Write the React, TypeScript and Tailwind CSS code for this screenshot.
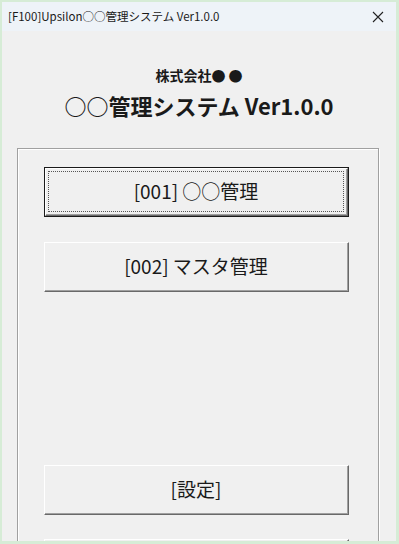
const jp = "font-['Noto_Sans_CJK_JP','Noto_Sans',sans-serif]";

function CloseIcon() {
  return (
    <svg width="12" height="12" viewBox="0 0 12 12" className="text-[#222]">
      <path d="M1 1 L11 11 M11 1 L1 11" stroke="currentColor" strokeWidth="1.1" fill="none" />
    </svg>
  );
}

function WinButton({ label, isDefault = false }: { label: string; isDefault?: boolean }) {
  if (isDefault) {
    return (
      <div className="w-[305px] h-[50px] shrink-0 border border-[#1a1a1a]">
        <div className="h-full border-t border-l border-white border-r-[#696969] border-b-[#696969] border-r border-b">
          <div className="h-full border-b border-r border-[#a0a0a0] p-[2px]">
            <div className="h-full border border-dotted border-[#555] flex items-center justify-center">
              <span className={`${jp} text-[19px] text-[#1a1a1a]`}>{label}</span>
            </div>
          </div>
        </div>
      </div>
    );
  }
  return (
    <div className="w-[305px] h-[50px] shrink-0 border-t border-l border-white border-r border-b border-r-[#696969] border-b-[#696969]">
      <div className="h-full border-b border-r border-[#a0a0a0] flex items-center justify-center">
        <span className={`${jp} text-[19px] text-[#1a1a1a]`}>{label}</span>
      </div>
    </div>
  );
}

export default function App() {
  return (
    <div className="w-[399px] h-[544px] overflow-hidden bg-[#d6ecd6] pt-[2px] pl-[2px] pr-[3px] pb-[3px]">
      <div className="h-full flex flex-col bg-[#f0f0f0] overflow-hidden">
        {/* title bar */}
        <div className="h-[29px] shrink-0 bg-[#eef3f8] flex items-center justify-between pl-[6px] pr-[12px]">
          <span className={`${jp} text-[11.5px] text-[#1a1a1a]`}>[F100]Upsilon○○管理システム Ver1.0.0</span>
          <CloseIcon />
        </div>

        {/* heading */}
        <div className="flex flex-col items-center pt-[34px] shrink-0">
          <div className={`${jp} font-bold text-[14px] leading-[20px] text-[#1a1a1a]`}>株式会社● ●</div>
          <div className={`${jp} font-bold text-[22px] leading-[30px] mt-[5px] text-[#1a1a1a]`}>○○管理システム Ver1.0.0</div>
        </div>

        {/* group box */}
        <div className="mt-[28px] ml-[15px] w-[362px] h-[420px] shrink-0 border border-[#a0a0a0] shadow-[inset_1px_1px_0_#fff,1px_1px_0_#fff] pl-[26px] pt-[18px] flex flex-col">
          <WinButton label="[001] ○○管理" isDefault />
          <div className="mt-[25px] shrink-0">
            <WinButton label="[002] マスタ管理" />
          </div>
          <div className="mt-[173px] shrink-0">
            <WinButton label="[設定]" />
          </div>
          <div className="mt-[24px] shrink-0">
            <WinButton label="" />
          </div>
        </div>
      </div>
    </div>
  );
}
